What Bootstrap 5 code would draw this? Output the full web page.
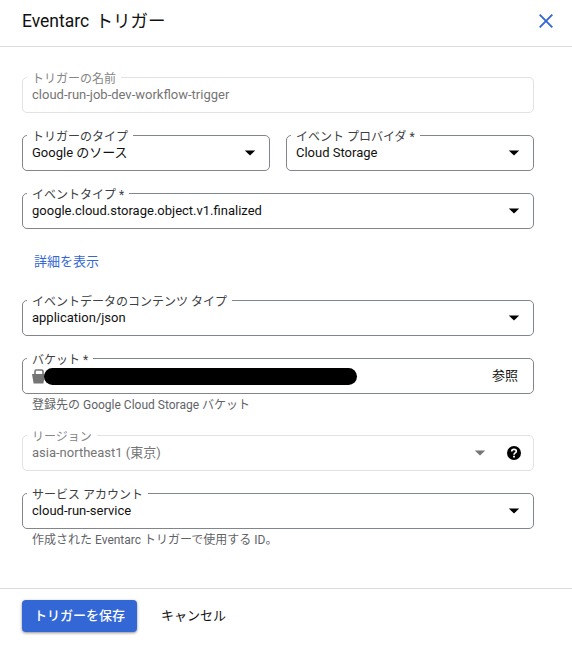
<!DOCTYPE html>
<html lang="ja">
<head>
<meta charset="utf-8">
<meta name="viewport" content="width=device-width, initial-scale=1">
<title>Eventarc トリガー</title>
<link href="https://cdn.jsdelivr.net/npm/bootstrap@5.3.0/dist/css/bootstrap.min.css" rel="stylesheet">
<style>
  body { font-family: Roboto, "Noto Sans CJK JP", sans-serif; font-size: 13px; line-height: 20px; color: #202124; background: #fff; height: 662px; overflow: hidden; }
  .panel-head { height: 47px; padding: 0 18px 4px 22px; border-bottom: 1px solid #dcdcdc; }
  .panel-title { font-size: 17.5px; line-height: 26px; font-weight: 400; word-spacing: 2px; color: #111; }
  .panel-body { height: 541px; padding: 30px 38px 0 22px; }
  .field { height: 36px; border: 1px solid #80868b; border-radius: 5px; padding: 0 13px 0 9px; color: #111; }
  .field-label { top: -7px; left: 4px; padding: 0 5px 0 5px; background: #fff; font-size: 12px; line-height: 17px; color: #3c4043; white-space: nowrap; }
  .field-value { z-index: 1; line-height: 18px; }
  .field.is-off { border-color: #e2e2e2; color: #757575; }
  .field.is-off .field-label { color: #858585; }
  .gap-row { margin-top: 22px; }
  .hint { font-size: 12px; line-height: 18px; margin: 2px 0 -1px; padding-left: 10px; color: #5f6368; }
  .more-link { color: #3367d6; margin: 23px 0 28px 12px; line-height: 20px; }
  .redacted { width: 313px; height: 17px; border-radius: 9px; background: #000; margin: 1px 0 0 -1.5px; }
  .help-icon { margin: 0 -1px 1px 21px; }
  .browse { margin-right: 2px; }
  .panel-foot { border-top: 1px solid #dcdcdc; padding: 11px 22px; gap: 24px; }
  .btn-save { width: 115px; height: 32px; padding: 0; font-size: 13px; line-height: 30px; font-weight: 500; border: 0; border-radius: 4px; background: #3367d6; color: #fff; box-shadow: 0 1px 3px rgba(0,0,0,.45); }
  .btn-plain { padding: 0; border: 0; font-size: 13px; line-height: 30px; color: #111; }
</style>
<script src="https://cdn.jsdelivr.net/npm/bootstrap@5.3.0/dist/js/bootstrap.bundle.min.js"></script>
</head>
<body>
<header class="panel-head d-flex align-items-center justify-content-between">
  <h1 class="panel-title m-0">Eventarc トリガー</h1>
  <svg width="16" height="16" viewBox="0 0 16 16" role="button" aria-label="閉じる"><path d="M1.7 1.7l12.6 12.6M14.3 1.7L1.7 14.3" stroke="#3367d6" stroke-width="1.9" fill="none"/></svg>
</header>

<main class="panel-body">
  <div class="field is-off position-relative d-flex align-items-center">
    <span class="field-label position-absolute">トリガーの名前</span>
    <span class="field-value">cloud-run-job-dev-workflow-trigger</span>
  </div>

  <div class="d-flex gap-3 gap-row">
    <div class="field position-relative d-flex align-items-center justify-content-between flex-fill w-50">
      <span class="field-label position-absolute">トリガーのタイプ</span>
      <span class="field-value">Google のソース</span>
      <svg width="12" height="6" viewBox="0 0 12 6"><path d="M.8 .5h10.400L6 5.500z"/></svg>
    </div>
    <div class="field position-relative d-flex align-items-center justify-content-between flex-fill w-50">
      <span class="field-label position-absolute">イベント プロバイダ *</span>
      <span class="field-value">Cloud Storage</span>
      <svg width="12" height="6" viewBox="0 0 12 6"><path d="M.8 .5h10.400L6 5.500z"/></svg>
    </div>
  </div>

  <div class="field position-relative d-flex align-items-center justify-content-between gap-row">
    <span class="field-label position-absolute">イベントタイプ *</span>
    <span class="field-value">google.cloud.storage.object.v1.finalized</span>
    <svg width="12" height="6" viewBox="0 0 12 6"><path d="M.8 .5h10.400L6 5.500z"/></svg>
  </div>

  <div class="more-link" role="button">詳細を表示</div>

  <div class="field position-relative d-flex align-items-center justify-content-between">
    <span class="field-label position-absolute">イベントデータのコンテンツ タイプ</span>
    <span class="field-value">application/json</span>
    <svg width="12" height="6" viewBox="0 0 12 6"><path d="M.8 .5h10.400L6 5.500z"/></svg>
  </div>

  <div class="field position-relative d-flex align-items-center gap-row">
    <span class="field-label position-absolute">バケット *</span>
    <svg class="field-value flex-shrink-0" width="13" height="15" viewBox="0 0 13 15"><path d="M0 5h13l-1.600 9.500H1.600z" fill="#757575"/><path d="M3 5V2.200Q3 1 4.200 1h5.600Q11 1 11 2.200V5" fill="none" stroke="#757575" stroke-width="1.600"/></svg>
    <div class="redacted field-value"></div>
    <span class="browse ms-auto field-value">参照</span>
  </div>
  <div class="hint">登録先の Google Cloud Storage バケット</div>

  <div class="field is-off position-relative d-flex align-items-center gap-row">
    <span class="field-label position-absolute">リージョン</span>
    <span class="field-value">asia-northeast1 (東京)</span>
    <svg class="ms-auto" width="12" height="6" viewBox="0 0 12 6"><path d="M.8 .5h10.400L6 5.500z" fill="#757575"/></svg>
    <svg class="help-icon" width="14" height="14" viewBox="0 0 14 14"><circle cx="7" cy="7" r="7"/><path d="M4.700 5.500C4.700 2.600 9.300 2.600 9.300 5.300 9.300 7 7 6.900 7 8.800" fill="none" stroke="#fff" stroke-width="1.700"/><path d="M6.100 9.800h1.800v1.700H6.100z" fill="#fff"/></svg>
  </div>

  <div class="field position-relative d-flex align-items-center justify-content-between gap-row">
    <span class="field-label position-absolute">サービス アカウント</span>
    <span class="field-value">cloud-run-service</span>
    <svg width="12" height="6" viewBox="0 0 12 6"><path d="M.8 .5h10.400L6 5.500z"/></svg>
  </div>
  <div class="hint">作成された Eventarc トリガーで使用する ID。</div>
</main>

<footer class="panel-foot d-flex align-items-center">
  <button type="button" class="btn btn-save">トリガーを保存</button>
  <button type="button" class="btn btn-plain">キャンセル</button>
</footer>
</body>
</html>
